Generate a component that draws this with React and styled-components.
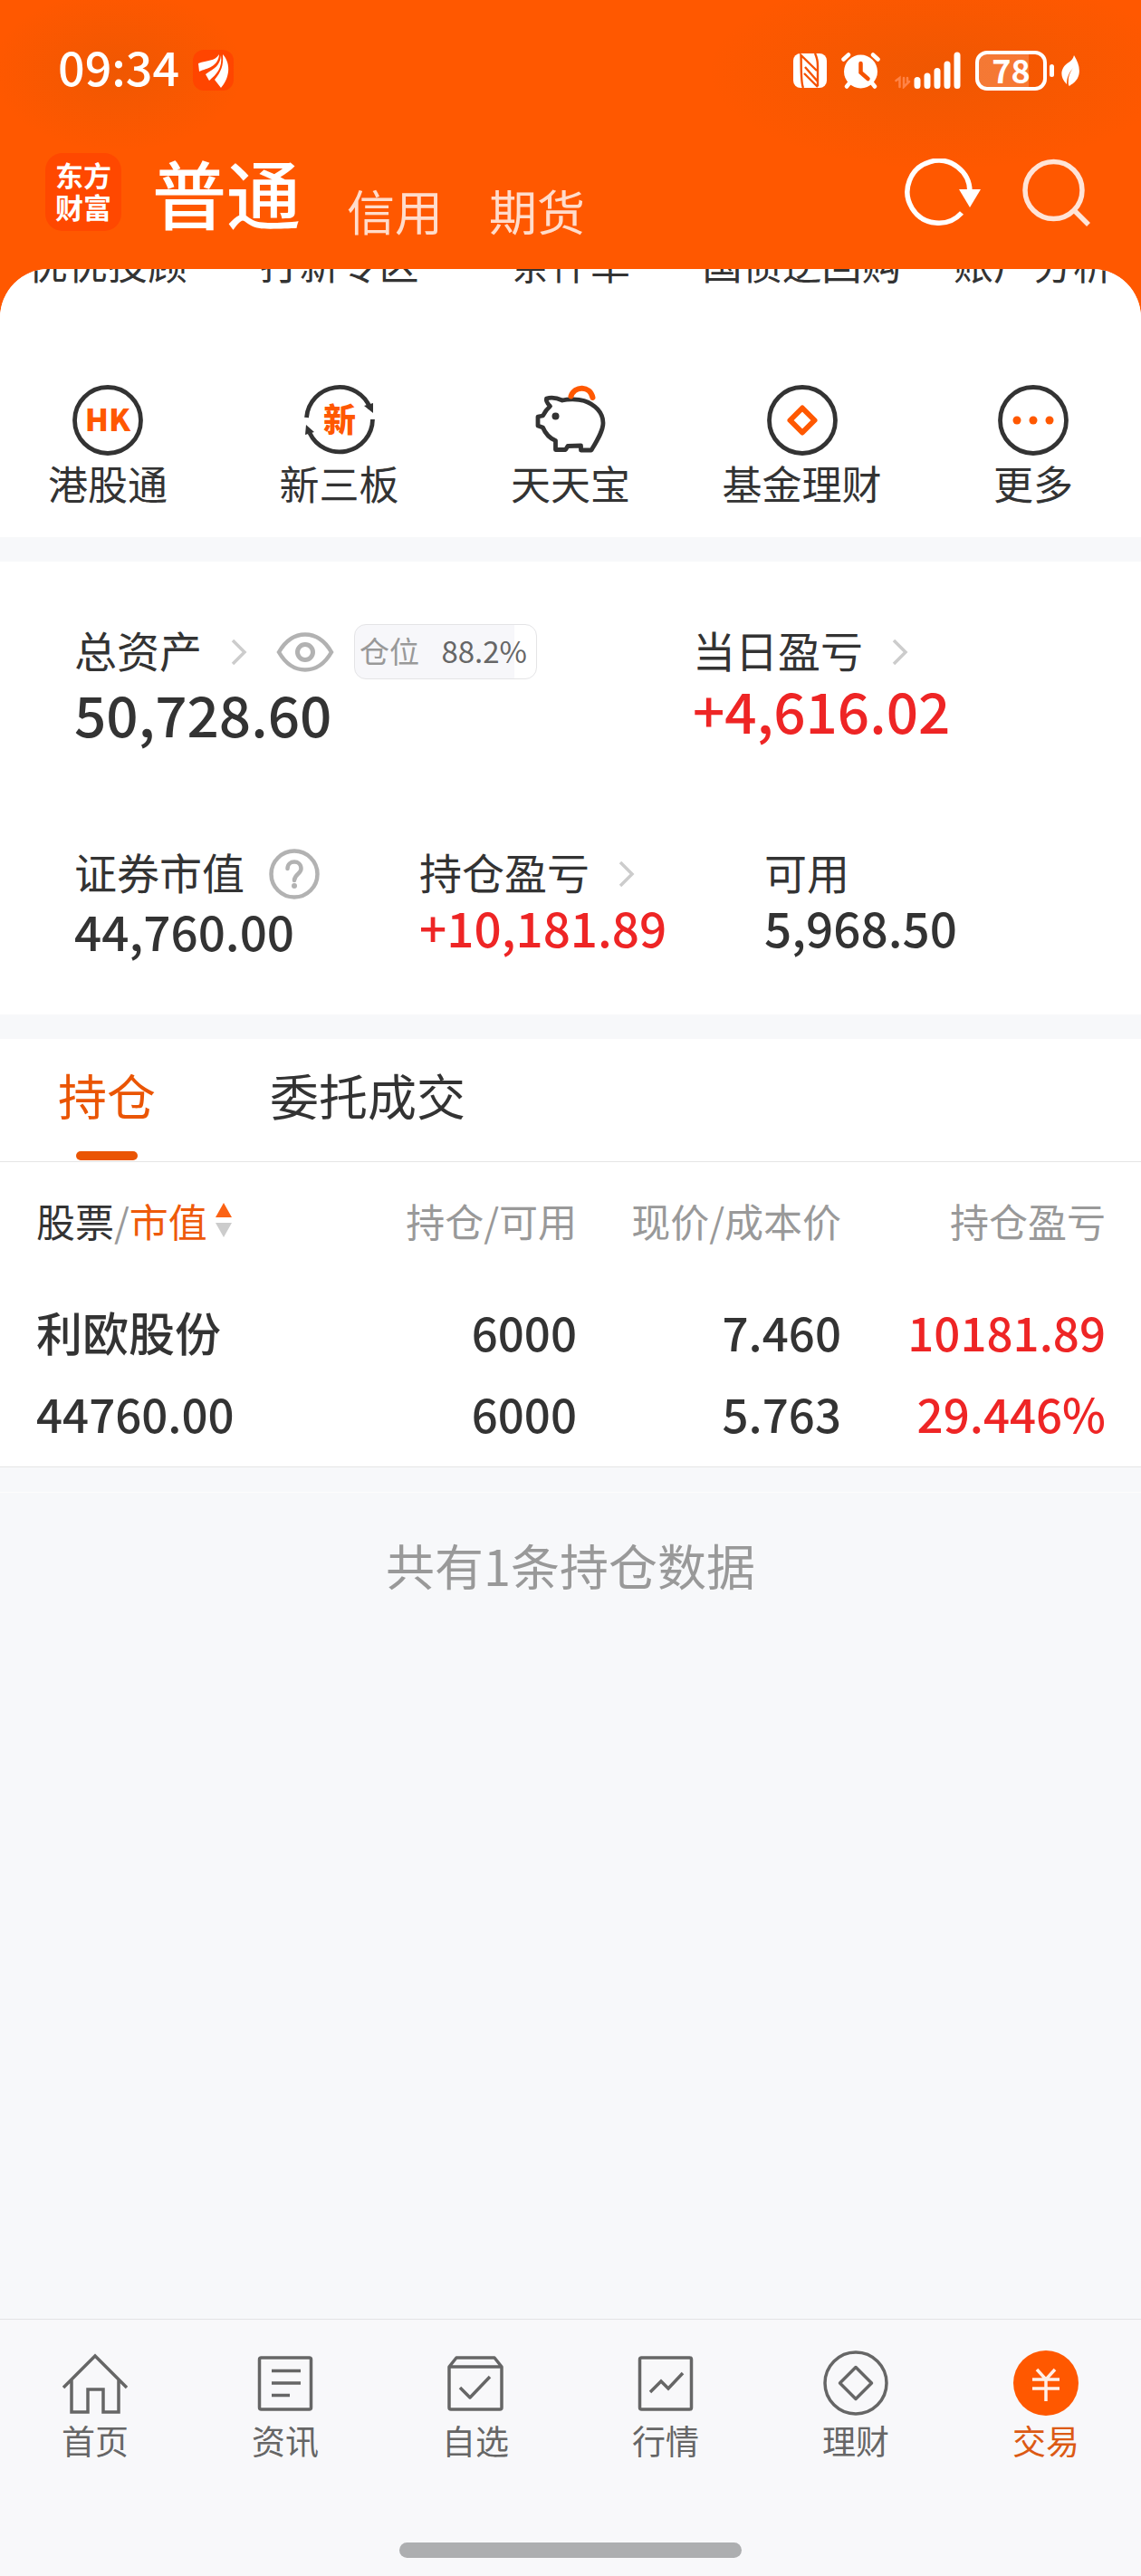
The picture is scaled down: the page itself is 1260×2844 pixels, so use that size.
import React from "react";
import styled, { createGlobalStyle } from "styled-components";

const GlobalStyle = createGlobalStyle`
  * {
    box-sizing: border-box;
  }
  body {
    margin: 0;
    background: #f7f8fa;
    color: #333333;
    font-family: "Noto Sans CJK SC", "Noto Sans", sans-serif;
  }
  button {
    margin: 0;
    padding: 0;
    border: 0;
    background: none;
    color: inherit;
    font: inherit;
    white-space: nowrap;
    cursor: pointer;
  }
  a {
    color: inherit;
    text-decoration: none;
  }
  svg {
    display: block;
    flex-shrink: 0;
  }
`;

const Page = styled.div`
  display: flex;
  flex-direction: column;
  min-height: 100vh;
  background: #ff5800;
`;

/* ---------- header ---------- */

const Header = styled.header`
  padding-bottom: 42px;
  color: white;
  background:
    radial-gradient(140px 90px at 130px 78px, rgba(80, 80, 20, 0.09), transparent),
    radial-gradient(260px 110px at calc(100% - 220px) 78px, rgba(80, 80, 20, 0.09), transparent);
`;
const StatusBar = styled.div`
  display: flex;
  justify-content: space-between;
  padding: 55px 67px 0 64px;
`;
const StatusGroup = styled.div`
  display: flex;
  align-items: center;
  gap: ${({ $gap }) => $gap};
  height: 45px;
`;
const Clock = styled.time`
  align-self: flex-start;
  font-size: 52px;
  font-weight: 500;
  line-height: 36px;
`;
const Battery = styled.div`
  display: flex;
  align-items: center;
  gap: 3px;
  &::after {
    content: "";
    width: 5px;
    height: 14px;
    border-radius: 3px;
    background: white;
  }
`;
const BatteryBody = styled.div`
  width: 79px;
  height: 44px;
  border: 4px solid white;
  border-radius: 13px;
  background: linear-gradient(rgba(255, 255, 255, 0.2), rgba(255, 255, 255, 0.2)) no-repeat;
  font-size: 36px;
  font-weight: 700;
  line-height: 32px;
  text-align: center;
`;
const TitleBar = styled.div`
  display: flex;
  align-items: flex-end;
  margin-top: 69px;
  padding: 0 56px 0 50px;
`;
const Logo = styled.div`
  width: 84px;
  height: 86px;
  margin-right: 34px;
  padding-top: 6px;
  border-radius: 19px;
  background: #ff4800;
  font-size: 31px;
  font-weight: 700;
  line-height: 35px;
  text-align: center;
`;
const AccountTabs = styled.nav`
  display: flex;
  align-items: flex-end;
  gap: 51px;
  flex: 1;
`;
const AccountTab = styled.button`
  font-size: ${({ $active }) => ($active ? "82px" : "53px")};
  font-weight: ${({ $active }) => ($active ? 500 : 400)};
  line-height: ${({ $active }) => ($active ? "86px" : "45px")};
  color: ${({ $active }) => ($active ? "white" : "#ffdccb")};
`;
const HeaderActions = styled.div`
  display: flex;
  align-items: center;
  gap: 46px;
  height: 84px;
`;

/* ---------- body panel ---------- */

const Panel = styled.main`
  display: flex;
  flex-direction: column;
  flex: 1;
  overflow: hidden;
  border-radius: 54px 54px 0 0;
  background: #f7f8fa;
`;
const Section = styled.section`
  background: white;
  & + & {
    margin-top: 27px;
  }
`;
const Shortcuts = styled(Section)`
  padding: 0 9px 30px;
`;
const ShortcutRow = styled.div`
  display: flex;
  justify-content: space-between;
  /* the first row is scrolled half out of view */
  &:first-child {
    margin: -37px 0 105px;
  }
`;
const Shortcut = styled.button`
  display: flex;
  flex-direction: column;
  align-items: center;
  width: 220px;
  font-size: 44px;
  line-height: 60px;
`;

const Assets = styled(Section)`
  padding: 64px 35px 60px 82px;
`;
const AssetRow = styled.div`
  display: grid;
  grid-template-columns: ${({ $columns }) => $columns};
  & + & {
    margin-top: 104px;
  }
`;
const AssetLabel = styled.div`
  display: flex;
  align-items: center;
  height: 65px;
  font-size: 47px;
  line-height: 62px;
  white-space: nowrap;
  /* icons and the badge sit a little below the text's middle */
  & > * {
    margin-top: 6px;
  }
`;
const AssetValue = styled.div`
  margin-top: ${({ $raised }) => ($raised ? "-4px" : "0")};
  font-size: ${({ $large }) => ($large ? "62px" : "53px")};
  font-weight: 500;
  line-height: ${({ $large }) => ($large ? "76px" : "66px")};
  color: ${({ $up }) => ($up ? "#ee2525" : "#333333")};
`;
const IconButton = styled.button`
  margin-left: ${({ $space }) => $space};
`;
const Position = styled.div`
  display: flex;
  justify-content: space-between;
  width: 202px;
  height: 61px;
  margin-left: 22px;
  padding: 0 10px 0 5px;
  border: 1px solid #e4e4e6;
  border-radius: 13px;
  background: linear-gradient(#f7f7fa, #f7f7fa) no-repeat;
  font-size: 33px;
  line-height: 56px;
  color: #999999;
`;
const PositionValue = styled.span`
  color: #666666;
`;

/* ---------- holdings ---------- */

const Tabs = styled.div`
  display: flex;
  gap: 126px;
  padding-left: 64px;
  border-bottom: 1px solid #e5e5e5;
`;
const Tab = styled.button`
  display: flex;
  flex-direction: column;
  align-items: center;
  height: 135px;
  font-size: 54px;
  line-height: 124px;
  color: ${({ $active }) => ($active ? "#ea5504" : "#333333")};
  &::after {
    content: "";
    width: 68px;
    height: 10px;
    border-radius: 5px;
    background: ${({ $active }) => ($active ? "#ea5504" : "transparent")};
  }
`;
const TableWrap = styled.div`
  padding: 0 39px 0 40px;
  border-bottom: 1px solid #e5e5e5;
`;
const Table = styled.table`
  width: 100%;
  border-collapse: collapse;
  table-layout: fixed;
`;
const Th = styled.th`
  width: ${({ $width }) => $width || "auto"};
  height: 127px;
  padding: 0;
  font-size: 43px;
  font-weight: 400;
  text-align: right;
  white-space: nowrap;
  color: #999999;
  &:first-child {
    text-align: left;
  }
`;
const SortButton = styled.button`
  display: flex;
  align-items: center;
`;
const SortName = styled.span`
  color: ${({ $active }) => ($active ? "#ee5a0a" : "#333333")};
`;
const Td = styled.td`
  padding: 15px 0 14px;
  font-size: 51px;
  font-weight: 500;
  line-height: 90px;
  text-align: right;
  white-space: nowrap;
  color: ${({ $up }) => ($up ? "#ee2525" : "#333333")};
  &:first-child {
    text-align: left;
  }
`;
const Summary = styled.p`
  margin: 27px 0 0;
  padding-top: 40px;
  border-top: 1px solid #fdfdfd;
  font-size: 54px;
  line-height: 80px;
  text-align: center;
  color: #999999;
`;

/* ---------- bottom navigation ---------- */

const BottomBar = styled.footer`
  padding-bottom: 20px;
  border-top: 1px solid #e2e3e5;
  background: #f8f8fa;
`;
const NavList = styled.nav`
  display: grid;
  grid-template-columns: repeat(6, 1fr);
  padding-top: 34px;
`;
const NavItem = styled.a`
  display: flex;
  flex-direction: column;
  align-items: center;
  gap: 2px;
  font-size: 37px;
  line-height: 50px;
  color: ${({ $active }) => ($active ? "#dc5a14" : "#666666")};
`;
const HomeIndicator = styled.div`
  width: 30%;
  height: 17px;
  margin: 88px auto 0;
  border-radius: 9px;
  background: #adaeb0;
`;

/* ---------- icons ---------- */

const AppMark = () => (
  <svg width="45" height="45" viewBox="0 0 45 45">
    <rect width="45" height="45" rx="12" fill="#ff4500" />
    <g fill="white">
      <path d="M29 5C24 13 16 11 6 15l1 9c9-4 21-5 22-19z" />
      <path d="M31 6c-1 12-7 14-17 21l4 7c8-7 15-14 13-28z" />
      <path d="M33 5c1 13-2 19-9 28l7 9c9-10 12-26 2-37z" />
    </g>
  </svg>
);

const NfcIcon = () => (
  <svg width="37" height="38" viewBox="0 0 37 38">
    <rect width="37" height="38" rx="8" fill="white" />
    <path
      d="M11 38C8 32 9 12 8.500 2L26 19M13 15l14 16M27 36V14c0-6-1-10-3-14M12 22l15 15"
      fill="none"
      stroke="#f55200"
      strokeWidth="2.4"
    />
  </svg>
);

const AlarmIcon = () => (
  <svg width="43" height="40" viewBox="0 0 43 40" fill="none" strokeLinecap="round">
    <circle cx="21.500" cy="21" r="18.500" fill="white" />
    <path d="M2.500 7.500 8 2.500M40.500 7.500 35 2.500M6 37.500l4-5M37 37.500l-4-5" stroke="white" strokeWidth="4.500" />
    <path d="M21.500 12v10l8 7" stroke="#f55200" strokeWidth="4.500" />
  </svg>
);

const SignalIcon = () => (
  <svg width="73" height="41" viewBox="0 0 73 41" fill="none" strokeLinecap="round">
    <path d="M1.500 32l4-3v10M10 29v10l6-6M14 29v4" stroke="#ff8347" strokeWidth="2.500" />
    <path d="M25 31.500v6M36 27v10.500M47 21.500v16M58 14v23.500M69 4v33.500" stroke="white" strokeWidth="7" />
  </svg>
);

const LeafIcon = () => (
  <svg width="21" height="34" viewBox="0 0 21 34">
    <path d="M14 0c7 11 10 25-4 33L9 34c-2-1-1-6-1-9 1-5 3-8 5-11-5 6-7 11-7 18C-4 22 1 12 8 8c3-2 5-4 6-8z" fill="white" />
  </svg>
);

const RefreshIcon = () => (
  <svg width="84" height="76" viewBox="0 0 84 76">
    <path d="M63 60A34.500 34.500 0 1 1 72 37" fill="none" stroke="white" strokeWidth="5.500" />
    <path d="M60 34h24L72 54z" fill="white" />
  </svg>
);

const SearchIcon = () => (
  <svg width="75" height="76" viewBox="0 0 75 76" fill="none" stroke="#ffe4d7" strokeWidth="5.500">
    <circle cx="34.500" cy="35" r="31.500" />
    <path d="M56 56l17 17" />
  </svg>
);

const Chevron = () => (
  <svg width="18" height="28" viewBox="0 0 18 28" fill="none" stroke="#cccccc" strokeWidth="3.500">
    <path d="M2 1l13 13L2 27" />
  </svg>
);

const EyeIcon = () => (
  <svg width="64" height="44" viewBox="0 0 64 44" fill="none" stroke="#b2b2b2">
    <path d="M3 22C18-4 46-4 61 22 46 48 18 48 3 22z" strokeWidth="4.500" />
    <circle cx="32" cy="22" r="8.500" strokeWidth="5" />
  </svg>
);

const HelpIcon = () => (
  <svg width="56" height="56" viewBox="0 0 56 56" fill="none" stroke="#b2b2b2">
    <circle cx="28" cy="28" r="25.500" strokeWidth="4.500" />
    <path d="M20.500 22c0-10 15-10 15 0 0 6-7.500 6-7.500 13" strokeWidth="4.500" strokeLinecap="round" />
    <circle cx="28" cy="41" r="3" fill="#b2b2b2" stroke="none" />
  </svg>
);

const SortArrows = () => (
  <svg width="28" height="40" viewBox="0 0 28 40">
    <path d="M9 17 18 1l9 16z" fill="#fb6214" />
    <path d="M9 23h18l-9 16z" fill="#cccccc" />
  </svg>
);

const ShortcutIcon = ({ children }) => (
  <svg width="78" height="78" viewBox="0 0 78 78" fill="none" stroke="#333333" strokeWidth="4.800">
    {children}
  </svg>
);

const IconText = styled.text`
  fill: #ff5800;
  stroke: none;
  font-size: ${({ $size }) => $size};
  font-weight: 900;
  text-anchor: middle;
`;

const shortcutIcons = {
  hk: (
    <ShortcutIcon>
      <circle cx="39" cy="39" r="36.500" />
      <IconText x="39" y="51" $size="34px">HK</IconText>
    </ShortcutIcon>
  ),
  board: (
    <ShortcutIcon>
      <path d="M2.500 36A36.500 36.500 0 0 1 73 26M75.500 38A36.500 36.500 0 0 1 6 53" />
      <path d="M66 23l10-3v11zM2 44l9 8-10 3z" fill="#333333" stroke="none" />
      <IconText x="39" y="52" $size="36px">新</IconText>
    </ShortcutIcon>
  ),
  pig: (
    <ShortcutIcon>
      <path
        d="M12.500 15c5-1.500 12-.500 17.500 2 6-1.500 17-1.500 24 .500 12 4 21 13 21 24.500 0 9-7 20-13 30H50.500V67L36 67.500 33.500 71.500h-11v-10C14 58 11 53 8.500 47L3 45V35l5.500-1c2-4 5-8 8-10.500-2-2-5-5-4-8.500z"
        strokeLinejoin="round"
      />
      <circle cx="22.500" cy="34.500" r="4" fill="#333333" stroke="none" />
      <path d="M39.500 12.500c4-12 21-12 24 1.500" stroke="#ff5800" strokeWidth="6" strokeLinecap="round" />
    </ShortcutIcon>
  ),
  fund: (
    <ShortcutIcon>
      <circle cx="39" cy="39" r="36.500" />
      <path d="M39 25.500 52.500 39 39 52.500 25.500 39z" stroke="#ff5800" strokeWidth="6" strokeLinejoin="round" />
    </ShortcutIcon>
  ),
  more: (
    <ShortcutIcon>
      <circle cx="39" cy="39" r="36.500" />
      <g fill="#ff5800" stroke="none">
        <circle cx="21" cy="39" r="4.500" />
        <circle cx="39" cy="39" r="4.500" />
        <circle cx="57" cy="39" r="4.500" />
      </g>
    </ShortcutIcon>
  ),
};

const NavIcon = ({ children }) => (
  <svg width="72" height="72" viewBox="0 0 72 72" fill="none" stroke="#666666" strokeWidth="3.500">
    {children}
  </svg>
);

const navIcons = {
  home: (
    <NavIcon>
      <path d="M1 41 36 6l35 35M10 32v36h18V43h17v25h17V32" />
    </NavIcon>
  ),
  news: (
    <NavIcon>
      <rect x="7.500" y="8" width="57" height="57" rx="2" />
      <path d="M21 22.500h32M21 36h32M21 49.500h20" />
    </NavIcon>
  ),
  watch: (
    <NavIcon>
      <path d="M7 18l8-10h42l8 10M7 18h58v45q0 2-2 2H9q-2 0-2-2zM19 41l11 11 22-23" strokeLinejoin="round" />
    </NavIcon>
  ),
  market: (
    <NavIcon>
      <rect x="7.500" y="8" width="57" height="57" rx="2" />
      <path d="M19 46l12-12 8 8 16-17" />
    </NavIcon>
  ),
  wealth: (
    <NavIcon>
      <circle cx="36" cy="36" r="34" />
      <path d="M36 18.500 53.500 36 36 53.500 18.500 36z" strokeLinejoin="round" />
    </NavIcon>
  ),
  trade: (
    <NavIcon>
      <circle cx="36" cy="36" r="36" fill="#ff5800" stroke="none" />
      <path d="M26 21l10 11 10-11M36 31v25M21 32h30M21 42h30" stroke="#fff0e8" />
    </NavIcon>
  ),
};

/* ---------- data ---------- */

const scrolledShortcuts = ["优优投顾", "打新专区", "条件单", "国债逆回购", "账户分析"];

const shortcuts = [
  { label: "港股通", icon: "hk" },
  { label: "新三板", icon: "board" },
  { label: "天天宝", icon: "pig" },
  { label: "基金理财", icon: "fund" },
  { label: "更多", icon: "more" },
];

const holdings = [
  {
    name: "利欧股份",
    value: "44760.00",
    amount: "6000",
    available: "6000",
    price: "7.460",
    cost: "5.763",
    profit: "10181.89",
    rate: "29.446%",
  },
];

const navItems = [
  { label: "首页", icon: "home" },
  { label: "资讯", icon: "news" },
  { label: "自选", icon: "watch" },
  { label: "行情", icon: "market" },
  { label: "理财", icon: "wealth" },
  { label: "交易", icon: "trade", active: true },
];

const positionRate = "88.2%";

function App() {
  return (
    <Page>
      <GlobalStyle />
      <Header>
        <StatusBar>
          <StatusGroup $gap="15px">
            <Clock>09:34</Clock>
            <AppMark />
          </StatusGroup>
          <StatusGroup $gap="16px">
            <NfcIcon />
            <AlarmIcon />
            <SignalIcon />
            <StatusGroup $gap="8px">
              <Battery>
                <BatteryBody style={{ backgroundSize: "78% 100%" }}>78</BatteryBody>
              </Battery>
              <LeafIcon />
            </StatusGroup>
          </StatusGroup>
        </StatusBar>
        <TitleBar>
          <Logo>
            东方
            <br />
            财富
          </Logo>
          <AccountTabs>
            <AccountTab $active>普通</AccountTab>
            <AccountTab>信用</AccountTab>
            <AccountTab>期货</AccountTab>
          </AccountTabs>
          <HeaderActions>
            <button aria-label="刷新">
              <RefreshIcon />
            </button>
            <button aria-label="搜索">
              <SearchIcon />
            </button>
          </HeaderActions>
        </TitleBar>
      </Header>

      <Panel>
        <Shortcuts>
          <ShortcutRow>
            {scrolledShortcuts.map((label) => (
              <Shortcut key={label}>{label}</Shortcut>
            ))}
          </ShortcutRow>
          <ShortcutRow>
            {shortcuts.map(({ label, icon }) => (
              <Shortcut key={label}>
                {shortcutIcons[icon]}
                {label}
              </Shortcut>
            ))}
          </ShortcutRow>
        </Shortcuts>

        <Assets>
          <AssetRow $columns="1fr 460px">
            <div>
              <AssetLabel>
                总资产
                <IconButton $space="32px" aria-label="总资产详情">
                  <Chevron />
                </IconButton>
                <IconButton $space="32px" aria-label="隐藏金额">
                  <EyeIcon />
                </IconButton>
                <Position style={{ backgroundSize: `${positionRate} 100%` }}>
                  仓位 <PositionValue>{positionRate}</PositionValue>
                </Position>
              </AssetLabel>
              <AssetValue $large>50,728.60</AssetValue>
            </div>
            <div>
              <AssetLabel>
                当日盈亏
                <IconButton $space="32px" aria-label="当日盈亏详情">
                  <Chevron />
                </IconButton>
              </AssetLabel>
              <AssetValue $large $up $raised>
                +4,616.02
              </AssetValue>
            </div>
          </AssetRow>
          <AssetRow $columns="repeat(3, 1fr)">
            <div>
              <AssetLabel>
                证券市值
                <IconButton $space="27px" aria-label="证券市值说明">
                  <HelpIcon />
                </IconButton>
              </AssetLabel>
              <AssetValue>44,760.00</AssetValue>
            </div>
            <div>
              <AssetLabel>
                持仓盈亏
                <IconButton $space="32px" aria-label="持仓盈亏详情">
                  <Chevron />
                </IconButton>
              </AssetLabel>
              <AssetValue $up $raised>
                +10,181.89
              </AssetValue>
            </div>
            <div>
              <AssetLabel>可用</AssetLabel>
              <AssetValue $raised>5,968.50</AssetValue>
            </div>
          </AssetRow>
        </Assets>

        <Section>
          <Tabs>
            <Tab $active>持仓</Tab>
            <Tab>委托成交</Tab>
          </Tabs>
          <TableWrap>
            <Table>
              <thead>
                <tr>
                  <Th>
                    <SortButton>
                      <SortName>股票</SortName>/<SortName $active>市值</SortName>
                      <SortArrows />
                    </SortButton>
                  </Th>
                  <Th $width="292px">持仓/可用</Th>
                  <Th $width="292px">现价/成本价</Th>
                  <Th $width="292px">持仓盈亏</Th>
                </tr>
              </thead>
              <tbody>
                {holdings.map((item) => (
                  <tr key={item.name}>
                    <Td>
                      <div>{item.name}</div>
                      <div>{item.value}</div>
                    </Td>
                    <Td>
                      <div>{item.amount}</div>
                      <div>{item.available}</div>
                    </Td>
                    <Td>
                      <div>{item.price}</div>
                      <div>{item.cost}</div>
                    </Td>
                    <Td $up>
                      <div>{item.profit}</div>
                      <div>{item.rate}</div>
                    </Td>
                  </tr>
                ))}
              </tbody>
            </Table>
          </TableWrap>
        </Section>
        <Summary>共有{holdings.length}条持仓数据</Summary>
      </Panel>

      <BottomBar>
        <NavList>
          {navItems.map(({ label, icon, active }) => (
            <NavItem key={label} href="#" $active={active}>
              {navIcons[icon]}
              {label}
            </NavItem>
          ))}
        </NavList>
        <HomeIndicator />
      </BottomBar>
    </Page>
  );
}

export default App;
